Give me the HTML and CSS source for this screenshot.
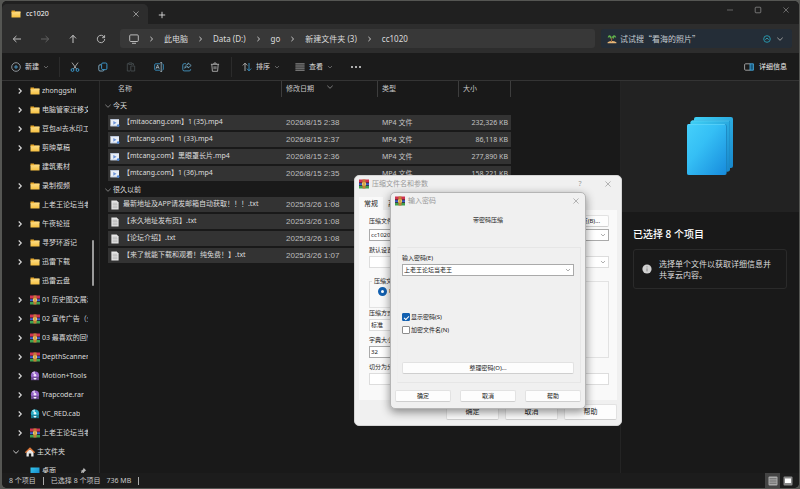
FILE: index.html
```html
<!DOCTYPE html>
<html lang="zh-CN">
<head>
<meta charset="utf-8">
<title>cc1020</title>
<link rel="stylesheet" href="styles.css">
</head>
<body>
<svg class="defs" width="0" height="0" aria-hidden="true">
  <defs>
    <linearGradient id="g-folder" x1="0" y1="0" x2="0" y2="1"><stop offset="0" stop-color="#ffe08a"/><stop offset="1" stop-color="#f5bf3f"/></linearGradient>
    <linearGradient id="g-desk" x1="0" y1="0" x2="1" y2="1"><stop offset="0" stop-color="#35c8ee"/><stop offset="1" stop-color="#1482c4"/></linearGradient>
    <linearGradient id="g-page" x1="0" y1="0" x2="1" y2="1"><stop offset="0" stop-color="#45d0fb"/><stop offset=".4" stop-color="#35bff5"/><stop offset="1" stop-color="#178bdc"/></linearGradient>
    <linearGradient id="g-back" x1="0" y1="0" x2="1" y2="1"><stop offset="0" stop-color="#3fd0f5"/><stop offset="1" stop-color="#1787cc"/></linearGradient>
    <symbol id="folder" viewBox="0 0 10 10"><path d="M.5 1.6h3.3l1.1 1.2h4.6V4H.5z" fill="#e8a92c"/><path d="M.5 3.2h3.6l.9-.7h4.5v6H.5z" fill="url(#g-folder)"/></symbol>
    <symbol id="rar" viewBox="0 0 10 10"><path d="M0 .5h10V4H0z" fill="#cf3350"/><path d="M0 4h10v2.500H0z" fill="#3f5fcb"/><path d="M0 6.500h10v3H0z" fill="#3fa04d"/><path d="M0 3.600h10v.6H0zM0 6.300h10v.6H0z" fill="#241a33"/><path d="M3.500.5h3v9h-3z" fill="#c47c35"/><path d="M3 3.500h4v3H3z" fill="#f0c863"/><path d="M4.500 4.500h1v1h-1z" fill="#6a3f22"/></symbol>
    <symbol id="disc-p" viewBox="0 0 10 10"><circle cx="5" cy="4.600" r="4.100" fill="#9664c8"/><path d="M5 4.600 2 1.800A4.100 4.100 0 0 1 5 .5z" fill="#d3b8ec"/><circle cx="5" cy="4.300" r="1.300" fill="#efe6f7"/><path d="M1 6.200h8v3H1z" fill="#6d4a92"/><path d="M3.200 7h3.600L5 9z" fill="#f4effa"/></symbol>
    <symbol id="disc-c" viewBox="0 0 10 10"><circle cx="5" cy="4.600" r="4.100" fill="#29a9c4"/><path d="M5 4.600 2 1.800A4.100 4.100 0 0 1 5 .5z" fill="#a9e6f0"/><circle cx="5" cy="4.300" r="1.300" fill="#e6f8fb"/><path d="M1 6.200h8v3H1z" fill="#187a92"/><path d="M3.200 7h3.600L5 9z" fill="#effafc"/></symbol>
    <symbol id="home" viewBox="0 0 10 10"><path d="M1.500 4.500 5 1.300l3.500 3.200v5H6.200V6.500H3.800v3H1.500z" fill="#e9e9e9"/><path d="M.8 5.300 5 1.200l4.200 4.100" fill="none" stroke="#e07a3c" stroke-width="1.300" stroke-linecap="round"/></symbol>
    <symbol id="desk" viewBox="0 0 10 10"><path d="M.5 1.500h9v7h-9z" fill="url(#g-desk)"/></symbol>
    <symbol id="pin" viewBox="0 0 8 8"><path d="M4.600.8 7.200 3.400l-.8.4-1.500 1.500-.3 1.400-3-3L3 3.400 4.400 2z" fill="#b5b5b5"/><path d="M3 5 1 7" stroke="#b5b5b5" stroke-width=".8"/></symbol>
    <symbol id="right" viewBox="0 0 6 8"><path d="M1.700 1.500 4.300 4 1.700 6.500" fill="none" stroke="currentColor" stroke-width="1.100"/></symbol>
    <symbol id="down" viewBox="0 0 8 6"><path d="M1.300 1.700 4 4.300l2.700-2.600" fill="none" stroke="currentColor" stroke-width=".9"/></symbol>
    <symbol id="cross" viewBox="0 0 10 10"><path d="m1.800 1.800 6.400 6.400M8.200 1.800 1.800 8.200" fill="none" stroke="currentColor" stroke-width=".9"/></symbol>
    <symbol id="video" viewBox="0 0 10 10"><path d="M.4 1.300h8.600v7H.4z" fill="#e9eef6"/><path d="M.4 1.300h8.600v.8H.4zM.4 7.500h8.600v.8H.4z" fill="#bcc9df"/><path d="M3.300 2.900 6.500 4.800 3.300 6.700z" fill="#6d93d8"/><circle cx="8.200" cy="7.600" r="1.300" fill="#4d87d8"/></symbol>
    <symbol id="txt" viewBox="0 0 10 10"><path d="M1.400.5h5.300l1.900 1.900v7.100H1.400z" fill="#e6e6e6"/><path d="M2.600 3.200h4.600M2.600 4.700h4.900M2.600 6.200h4.900M2.600 7.700h4.900" stroke="#a0a0a0" stroke-width=".6"/></symbol>
  </defs>
</svg>

<div class="window">
  <header class="tabs">
    <div class="tab">
      <svg class="i10"><use href="#folder"/></svg>
      <span class="tab-name">cc1020</span>
      <button class="plain" aria-label="关闭标签页"><svg class="i8"><use href="#cross"/></svg></button>
    </div>
    <button class="plain new-tab" aria-label="新标签页"><svg class="i8" viewBox="0 0 8 8"><path d="M4 .8v6.400M.8 4h6.400" stroke="#ddd" stroke-width=".9"/></svg></button>
    <div class="win-buttons">
      <button class="plain" aria-label="最小化"><svg class="i8" viewBox="0 0 8 8"><path d="M1 4h6" stroke="#777" stroke-width=".8"/></svg></button>
      <button class="plain" aria-label="最大化"><svg class="i8" viewBox="0 0 8 8"><rect x="1.200" y="1.200" width="5.600" height="5.600" rx=".8" fill="none" stroke="#888" stroke-width=".8"/></svg></button>
      <button class="plain" aria-label="关闭"><svg class="i8"><use href="#cross"/></svg></button>
    </div>
  </header>

  <nav class="navbar">
    <div class="nav-buttons">
      <button class="plain" aria-label="后退"><svg class="i10" viewBox="0 0 10 10"><path d="M9 5H1.400M4.400 2 1.300 5l3.100 3" fill="none" stroke="#d0d0d0" stroke-width=".9"/></svg></button>
      <button class="plain" aria-label="前进" disabled><svg class="i10" viewBox="0 0 10 10"><path d="M1 5h7.600M5.600 2l3.100 3-3.100 3" fill="none" stroke="#696969" stroke-width=".9"/></svg></button>
      <button class="plain" aria-label="向上"><svg class="i10" viewBox="0 0 10 10"><path d="M5 9V1.400M2 4.400l3-3.100 3 3.100" fill="none" stroke="#d8d8d8" stroke-width=".9"/></svg></button>
      <button class="plain" aria-label="刷新"><svg class="i10" viewBox="0 0 10 10"><path d="M8.300 3.300A3.700 3.700 0 1 0 8.700 5M8.600 1.200v2.500H6.100" fill="none" stroke="#c4c4c4" stroke-width=".9"/></svg></button>
    </div>
    <div class="address">
      <svg class="i10" viewBox="0 0 10 10"><rect x=".7" y=".9" width="8.600" height="6.600" rx="1" fill="none" stroke="#c8c8c8" stroke-width=".9"/><path d="M3 9.300h4" stroke="#c8c8c8" stroke-width=".9"/></svg>
      <svg class="sep"><use href="#right"/></svg><a href="#">此电脑</a>
      <svg class="sep"><use href="#right"/></svg><a href="#">Data (D:)</a>
      <svg class="sep"><use href="#right"/></svg><a href="#">go</a>
      <svg class="sep"><use href="#right"/></svg><a href="#">新建文件夹 (3)</a>
      <svg class="sep"><use href="#right"/></svg><a href="#">cc1020</a>
    </div>
    <div class="search">
      <svg class="i10" viewBox="0 0 10 10"><path d="M.6 8.200Q5 5.800 9.400 8.200v1H.6z" fill="#e6b678"/><path d="M4.900 3.200 4.400 8" stroke="#a06b3b" stroke-width="1"/><path d="M4.800 3.200C3 .2.800 1 .8 3.800l2-.7L3 5zM4.800 3.200C6.600.2 9 1 9.200 3.800l-2-.7-.4 1.800z" fill="#5fae4c"/></svg>
      <input type="text" value="试试搜“看海的照片”" aria-label="搜索">
      <svg class="i8" viewBox="0 0 8 8"><circle cx="4" cy="4" r="3.300" fill="none" stroke="#2a93a8"/><path d="M2.400 4.700 4 3l1.600 1.700" fill="none" stroke="#2fa9c0" stroke-width=".9"/></svg>
      <svg class="down"><use href="#down"/></svg>
    </div>
  </nav>

  <div class="commands">
    <button class="cmd new"><svg class="i10" viewBox="0 0 10 10"><circle cx="5" cy="5" r="4.300" fill="none" stroke="#a9b3b9" stroke-width=".8"/><path d="M5 3v4M3 5h4" stroke="#58aadd" stroke-width=".8"/></svg>新建<svg class="down"><use href="#down"/></svg></button>
    <div class="cmd-icons">
      <button class="plain" aria-label="剪切"><svg class="i10" viewBox="0 0 10 10"><path d="M2 .6 6.600 7M8 .6 3.400 7" stroke="#c5c5c5" stroke-width=".8"/><circle cx="2.500" cy="8" r="1.400" fill="none" stroke="#3ea3dc" stroke-width=".9"/><circle cx="7.500" cy="8" r="1.400" fill="none" stroke="#3ea3dc" stroke-width=".9"/></svg></button>
      <button class="plain" aria-label="复制"><svg class="i10" viewBox="0 0 10 10"><path d="M3 2.800H2A1.200 1.200 0 0 0 .8 4v3.800A1.200 1.200 0 0 0 2 9h2.800A1.200 1.200 0 0 0 6 8" fill="none" stroke="#8fc1de" stroke-width=".8"/><rect x="3.600" y="1" width="5.300" height="6.600" rx="1.200" fill="none" stroke="#3ea3dc" stroke-width=".9"/></svg></button>
      <button class="plain" aria-label="粘贴" disabled><svg class="i10" viewBox="0 0 10 10"><path d="M4 9H1.300V1.700h1.500M6 1.700h1.500v1.500M2.800.9H6v1.500H2.800zM4.800 4h3.900v5H4.800z" fill="none" stroke="#4a5154" stroke-width=".8"/></svg></button>
      <button class="plain" aria-label="重命名"><svg class="i10" viewBox="0 0 10 10"><path d="M6 1.800H1.700a1 1 0 0 0-1 1v4.400a1 1 0 0 0 1 1H6M8.400 1.800a1 1 0 0 1 .9 1v4.400a1 1 0 0 1-.9 1" fill="none" stroke="#3ea3dc" stroke-width=".8"/><path d="M7.200.6v8.800M6.300.6h1.800M6.300 9.400h1.800M2 6.800l1.600-3.900 1.600 3.900M2.500 5.600h2.200" fill="none" stroke="#b8d0dc" stroke-width=".7"/></svg></button>
      <button class="plain" aria-label="共享"><svg class="i10" viewBox="0 0 10 10"><path d="M4 1.700H2.200A1.400 1.400 0 0 0 .8 3.100v4.400a1.400 1.400 0 0 0 1.400 1.400h5a1.400 1.400 0 0 0 1.400-1.400V7" fill="none" stroke="#4aa6d8" stroke-width=".8"/><path d="M6 .9 9.200 3.500 6 6V4.600C4.500 4.600 3.600 5 2.800 6.300 3 4 4.200 2.600 6 2.400z" fill="none" stroke="#7fc0e0" stroke-width=".7"/></svg></button>
      <button class="plain" aria-label="删除"><svg class="i10" viewBox="0 0 10 10"><path d="M.9 2.300h8.200M3.500 2.200C3.500.4 6.500.4 6.500 2.200M1.800 2.400l.6 6.900h5.200l.6-6.900M4.100 4.200v3M5.900 4.200v3" fill="none" stroke="#c4c4c4" stroke-width=".8"/></svg></button>
    </div>
    <button class="cmd"><svg class="i10" viewBox="0 0 10 10"><path d="M3 9V1.300M.8 3.400 3 1.200l2.200 2.200" fill="none" stroke="#c8c8c8" stroke-width=".8"/><path d="M7 1v7.700M4.900 6.600 7 8.800l2.200-2.200" fill="none" stroke="#3ea3dc" stroke-width=".8"/></svg>排序<svg class="down"><use href="#down"/></svg></button>
    <button class="cmd view"><svg class="i10" viewBox="0 0 10 10"><path d="M.4 1.900h9.200M.4 4h9.200M.4 6.100h9.200M.4 8.200h9.200" stroke="#bdbdbd" stroke-width=".8"/></svg>查看<svg class="down"><use href="#down"/></svg></button>
    <button class="plain more" aria-label="更多"><svg class="i10" viewBox="0 0 10 10"><path d="M0 4.200h2v1.600H0zM4 4.200h2v1.600H4zM8 4.200h2v1.600H8z" fill="#e0e0e0"/></svg></button>
    <button class="cmd details-toggle"><svg class="i10" viewBox="0 0 10 10"><path d="M6 1.800H1.600a1 1 0 0 0-1 1v4.400a1 1 0 0 0 1 1H6" fill="none" stroke="#bbb" stroke-width=".8"/><path d="M6 1.800h3.400v6.400H6z" fill="#175a80" stroke="#4db2e8" stroke-width=".8"/></svg>详细信息</button>
  </div>

  <main class="content">
    <aside class="sidebar">
      <ul class="tree">
        <li><svg class="sep"><use href="#right"/></svg><svg class="i10"><use href="#folder"/></svg><span>zhonggshi</span></li>
        <li><svg class="sep"><use href="#right"/></svg><svg class="i10"><use href="#folder"/></svg><span>电脑管家迁移文件</span></li>
        <li><svg class="sep"><use href="#right"/></svg><svg class="i10"><use href="#folder"/></svg><span>豆包al去水印工具</span></li>
        <li><svg class="sep"><use href="#right"/></svg><svg class="i10"><use href="#folder"/></svg><span>剪映草稿</span></li>
        <li class="leaf"><svg class="i10"><use href="#folder"/></svg><span>建筑素材</span></li>
        <li><svg class="sep"><use href="#right"/></svg><svg class="i10"><use href="#folder"/></svg><span>录制视频</span></li>
        <li class="leaf"><svg class="i10"><use href="#folder"/></svg><span>上老王论坛当老王</span></li>
        <li><svg class="sep"><use href="#right"/></svg><svg class="i10"><use href="#folder"/></svg><span>午夜轮班</span></li>
        <li><svg class="sep"><use href="#right"/></svg><svg class="i10"><use href="#folder"/></svg><span>寻梦环游记</span></li>
        <li><svg class="sep"><use href="#right"/></svg><svg class="i10"><use href="#folder"/></svg><span>迅雷下载</span></li>
        <li class="leaf"><svg class="i10"><use href="#folder"/></svg><span>迅雷云盘</span></li>
        <li><svg class="sep"><use href="#right"/></svg><svg class="i10"><use href="#rar"/></svg><span>01 历史图文展示</span></li>
        <li><svg class="sep"><use href="#right"/></svg><svg class="i10"><use href="#rar"/></svg><span>02 宣传广告（全）</span></li>
        <li><svg class="sep"><use href="#right"/></svg><svg class="i10"><use href="#rar"/></svg><span>03 最喜欢的回忆</span></li>
        <li><svg class="sep"><use href="#right"/></svg><svg class="i10"><use href="#rar"/></svg><span>DepthScanner</span></li>
        <li><svg class="sep"><use href="#right"/></svg><svg class="i10"><use href="#disc-p"/></svg><span>Motion+Tools</span></li>
        <li><svg class="sep"><use href="#right"/></svg><svg class="i10"><use href="#disc-p"/></svg><span>Trapcode.rar</span></li>
        <li><svg class="sep"><use href="#right"/></svg><svg class="i10"><use href="#disc-c"/></svg><span>VC_RED.cab</span></li>
        <li><svg class="sep"><use href="#right"/></svg><svg class="i10"><use href="#rar"/></svg><span>上老王论坛当老王</span></li>
        <li class="root"><svg class="down"><use href="#down"/></svg><svg class="i10"><use href="#home"/></svg><span>主文件夹</span></li>
        <li class="leaf"><svg class="i10"><use href="#desk"/></svg><span>桌面</span><svg class="i8 pin"><use href="#pin"/></svg></li>
      </ul>
      <div class="scroll"><div class="thumb"></div></div>
    </aside>

    <section class="files">
      <table>
        <colgroup><col class="c-gap"><col class="c-name"><col class="c-date"><col class="c-type"><col class="c-size"></colgroup>
        <thead><tr><td></td><th class="h-name">名称</th><th class="sorted">修改日期<svg class="down"><use href="#down"/></svg></th><th>类型</th><th>大小</th></tr></thead>
        <tbody>
          <tr class="group"><th colspan="5"><svg class="down"><use href="#down"/></svg>今天</th></tr>
          <tr><td></td><td><svg class="i10"><use href="#video"/></svg>【mitaocang.com】1 (35).mp4</td><td>2026/8/15 2:38</td><td>MP4 文件</td><td>232,326 KB</td></tr>
          <tr><td></td><td><svg class="i10"><use href="#video"/></svg>【mtcang.com】1 (33).mp4</td><td>2026/8/15 2:37</td><td>MP4 文件</td><td>86,118 KB</td></tr>
          <tr><td></td><td><svg class="i10"><use href="#video"/></svg>【mtcang.com】黑眼罩长片.mp4</td><td>2026/8/15 2:36</td><td>MP4 文件</td><td>277,890 KB</td></tr>
          <tr><td></td><td><svg class="i10"><use href="#video"/></svg>【mtcang.com】1 (36).mp4</td><td>2026/8/15 2:35</td><td>MP4 文件</td><td>158,221 KB</td></tr>
        </tbody>
        <tbody>
          <tr class="group late"><th colspan="5"><svg class="down"><use href="#down"/></svg>很久以前</th></tr>
          <tr><td></td><td><svg class="i10"><use href="#txt"/></svg>最新地址及APP请发邮箱自动获取！！！.txt</td><td>2025/3/26 1:08</td><td></td><td></td></tr>
          <tr><td></td><td><svg class="i10"><use href="#txt"/></svg>【永久地址发布页】.txt</td><td>2025/3/26 1:08</td><td></td><td></td></tr>
          <tr><td></td><td><svg class="i10"><use href="#txt"/></svg>【论坛介绍】.txt</td><td>2025/3/26 1:08</td><td></td><td></td></tr>
          <tr><td></td><td><svg class="i10"><use href="#txt"/></svg>【来了就能下载和观看！纯免费！】.txt</td><td>2025/3/26 1:07</td><td></td><td></td></tr>
        </tbody>
      </table>
    </section>

    <aside class="details">
      <div class="preview">
        <svg width="48" height="60" viewBox="0 0 48 60"><rect x="8" y="1" width="39" height="51" rx="2" fill="url(#g-back)"/><rect x="4.500" y="4.500" width="39.500" height="51" rx="2" fill="#1b86bd"/><rect x="4.500" y="4.500" width="39" height="51" rx="2" fill="url(#g-back)"/><rect x="1" y="8" width="39.700" height="51" rx="2" fill="#1a80bb"/><rect x="1" y="8" width="39" height="51" rx="2" fill="url(#g-page)"/><path d="M2 8.500h37M6 4.900h37" stroke="#85e6fd" stroke-width=".6" opacity=".6"/></svg>
      </div>
      <h2>已选择 8 个项目</h2>
      <div class="hint">
        <svg class="i10" viewBox="0 0 10 10"><circle cx="5" cy="5" r="4.600" fill="#d0d0d0"/><path d="M5 4.400v3M5 2.400v1" stroke="#777" stroke-width=".8"/></svg>
        <p>选择单个文件以获取详细信息并共享云内容。</p>
      </div>
    </aside>
  </main>

  <footer class="status">
    <span>8 个项目</span><i class="bar"></i><span>已选择 8 个项目</span><span class="total">736 MB</span><i class="bar"></i>
    <div class="view-modes">
      <button class="plain on" aria-label="详细信息视图"><svg class="i10" viewBox="0 0 10 10"><rect x=".5" y=".5" width="9" height="9" rx="1" fill="#aaa"/><path d="M1.500 2.800h7M1.500 5h7M1.500 7.200h7" stroke="#555" stroke-width=".8"/></svg></button>
      <button class="plain" aria-label="大图标视图"><svg class="i10" viewBox="0 0 10 10"><rect x=".5" y=".5" width="9" height="9" rx="1" fill="#888"/><path d="M2 2.500h6v4.500H2z" fill="#fff"/></svg></button>
    </div>
  </footer>
</div>

<div class="dialog archive" role="dialog" aria-label="压缩文件名和参数">
  <div class="title"><svg class="i10"><use href="#rar"/></svg><span>压缩文件名和参数</span><button class="plain help" aria-label="帮助">?</button><button class="plain" aria-label="关闭"><svg class="i8"><use href="#cross"/></svg></button></div>
  <div class="sheet-tabs"><button class="active">常规</button><button>高级</button></div>
  <div class="sheet">
    <div class="line"><label for="arc">压缩文件名(A)</label><button class="btn browse">浏览(B)...</button></div>
    <div class="combo"><input id="arc" type="text" value="cc1020.rar"><svg class="down"><use href="#down"/></svg></div>
    <label class="lab" for="prof">默认设置</label>
    <div class="combo soft"><select id="prof"><option></option></select><svg class="down"><use href="#down"/></svg></div>
    <div class="cols">
      <div class="col">
        <fieldset class="format"><legend>压缩文件格式</legend><label><input type="radio" name="fmt" checked>RAR</label></fieldset>
        <label class="lab" for="method">压缩方式(C)</label>
        <div class="combo soft"><select id="method"><option>标准</option></select></div>
        <label class="lab" for="dict">字典大小(I)</label>
        <div class="combo"><select id="dict"><option>32</option></select></div>
      </div>
      <fieldset class="options"></fieldset>
    </div>
    <label class="lab" for="split">切分为分卷(V)</label>
    <div class="combo soft"><input id="split" type="text"></div>
  </div>
  <div class="actions"><button class="btn">确定</button><button class="btn">取消</button><button class="btn">帮助</button></div>
</div>

<div class="dialog password" role="dialog" aria-label="输入密码">
  <div class="title"><svg class="i10"><use href="#rar"/></svg><span>输入密码</span><button class="plain" aria-label="关闭"><svg class="i8"><use href="#cross"/></svg></button></div>
  <p class="lead">带密码压缩</p>
  <div class="box">
    <label class="lab" for="pw">输入密码(E)</label>
    <div class="combo"><input id="pw" type="text" value="上老王论坛当老王"><svg class="down"><use href="#down"/></svg></div>
    <div class="checks">
      <label><input type="checkbox" checked>显示密码(S)</label>
      <label><input type="checkbox">加密文件名(N)</label>
    </div>
    <button class="btn organize">整理密码(O)...</button>
  </div>
  <div class="actions"><button class="btn">确定</button><button class="btn">取消</button><button class="btn">帮助</button></div>
</div>
</body>
</html>
```

FILE: styles.css
```css
* { box-sizing: border-box; }
html, body { height: 100%; }
body {
  margin: 0;
  padding: 1px 1px 1px 2px;
  background: #555653;
  color: #dcdcdc;
  font: 7px/10px "Noto Sans", "Noto Sans CJK SC", sans-serif;
  overflow: hidden;
  display: flex;
  flex-direction: column;
}
button, input, select { font: inherit; color: inherit; margin: 0; }
p, h2, ul { margin: 0; padding: 0; }
a { color: inherit; text-decoration: none; }
svg { display: block; flex: none; }
.defs { height: 0; }
.i10 { width: 10px; height: 10px; }
.i8 { width: 8px; height: 8px; }
.sep { width: 6px; height: 8px; }
.down { width: 8px; height: 6px; }
.plain { display: flex; align-items: center; justify-content: center; padding: 0; border: 0; background: none; }

.window {
  flex: 1;
  min-height: 0;
  display: flex;
  flex-direction: column;
  background: #191919;
  border-radius: 5px;
  overflow: hidden;
}

/* tab strip */
.tabs { display: flex; height: 23px; background: #202020; align-items: center; }
.tab {
  display: flex;
  align-items: center;
  align-self: flex-end;
  gap: 5px;
  width: 146px;
  height: 20px;
  padding: 0 8px 0 9px;
  background: #2d2d2d;
  border-radius: 5px 5px 0 0;
}
.tab-name { flex: 1; color: #fff; }
.new-tab { margin-left: 8px; width: 12px; padding-top: 4px; }
.tabs .i8 { color: #bbb; }
.win-buttons { display: flex; gap: 20px; margin: 0 9px 6px auto; }
.win-buttons .i8 { color: #888; }

/* navigation bar */
.navbar { display: flex; align-items: center; height: 29px; padding-right: 7px; background: #2d2d2d; font-size: 8px; }
.nav-buttons { display: flex; gap: 18px; width: 118px; padding-left: 10px; }
.address {
  flex: 1;
  display: flex;
  align-items: center;
  gap: 10px;
  height: 19px;
  padding-left: 9px;
  background: #383838;
  border-radius: 3px;
}
.address .sep { width: 5px; color: #ddd; }
.search {
  display: flex;
  align-items: center;
  gap: 3px;
  width: 191px;
  height: 19px;
  margin-left: 6px;
  padding: 0 8px 0 6px;
  background: #242d37;
  border-radius: 3px;
}
.search input { flex: 1; min-width: 0; border: 0; padding: 0; background: none; color: #c5cbd0; font-family: "Noto Sans CJK SC", sans-serif; }
.search .i8 { margin-right: 2px; }
.search .down { color: #aaa; }

/* command bar */
.commands {
  display: flex;
  align-items: center;
  height: 28px;
  padding: 0 12px 0 9px;
  background: #1b1b1b;
  border-bottom: 1px solid #343434;
}
.cmd { display: flex; align-items: center; gap: 4px; padding: 0; border: 0; background: none; }
.cmd .down { width: 6px; color: #888; }
.cmd.new { width: 48px; }
.cmd-icons { display: flex; gap: 18px; margin-right: 10px; padding: 5px 11px 5px 10px; border: solid #2b2b2b; border-width: 0 1px; }
.cmd.view { margin-left: 15px; }
.more { margin-left: 18px; }
.details-toggle { margin-left: auto; color: #eee; gap: 5px; }

/* content */
.content { flex: 1; min-height: 0; display: flex; }
.sidebar { display: flex; width: 98px; border-right: 1px solid #2b2b2b; overflow: hidden; }
.tree { flex: 1; min-width: 0; list-style: none; }
.tree li { display: flex; align-items: center; height: 19px; padding-left: 15px; white-space: nowrap; }
.tree .sep { margin-right: 7px; }
.tree li.leaf { padding-left: 28px; }
.tree li.root { padding-left: 10px; }
.tree .down { margin-right: 5px; }
.tree span { margin-left: 2px; overflow: hidden; }
.pin { margin-left: 23px; }
.scroll { width: 11px; padding: 159px 0 0 4px; }
.thumb { width: 2px; height: 46px; background: #9a9a9a; border-radius: 1px; }

.files { flex: 1; min-width: 0; padding-left: 4px; overflow: hidden; }
.files table { width: 407px; table-layout: fixed; border-spacing: 0; }
.c-gap { width: 4px; }
.c-name { width: 174px; }
.c-date { width: 96px; }
.c-type { width: 81px; }
.c-size { width: 52px; }
.files th, .files td { padding: 0 4px; font-weight: 400; text-align: left; white-space: nowrap; overflow: hidden; }
.files thead th { height: 16px; border-right: 1px solid #3d3d3d; color: #c8c8c8; }
.files thead .h-name { padding-left: 10px; }
.sorted .down { display: inline-block; margin-left: 12px; vertical-align: top; color: #888; }
.files .group th { height: 18px; padding: 0; }
.files .group.late th { height: 14px; }
.group .down { display: inline-block; margin-right: 1px; vertical-align: middle; color: #888; }
.files tbody td { height: 17px; border-bottom: 2px solid transparent; background: #333 padding-box; }
.files tbody td:first-child { padding: 0; background: none; }
.files tbody td:nth-child(2) { padding-left: 2px; }
.files tbody td:nth-child(3) { color: #bdbdbd; font-family: "Liberation Sans", "Noto Sans CJK SC", sans-serif; font-size: 8px; }
.files tbody td:nth-child(4) { color: #c4c4c4; }
.files tbody td:nth-child(5) { color: #c4c4c4; text-align: right; padding-right: 3px; }
.files td .i10 { display: inline-block; margin-right: 3px; vertical-align: middle; }

.details { width: 179px; border-left: 1px solid #242424; }
.preview { display: flex; justify-content: center; height: 131px; padding-top: 35px; background: #222; }
.details h2 { margin: 15px 12px 0; font-size: 10px; line-height: 14px; font-weight: 500; color: #fff; }
.hint {
  display: flex;
  align-items: center;
  gap: 7px;
  margin: 8px 12px 0;
  padding: 8px;
  border: 1px solid #2a2a2a;
  border-radius: 3px;
  font-size: 8px;
  line-height: 11px;
}

/* status bar */
.status { display: flex; align-items: center; height: 15px; padding-left: 7px; background: #1c1c1c; color: #c8c8c8; }
.bar { width: 1px; height: 8px; margin: 0 7px; background: #aaa; }
.total { margin-left: 6px; }
.view-modes { display: flex; align-self: stretch; margin-left: auto; margin-right: 4px; }
.view-modes button { width: 15px; }
.view-modes .on { background: #444; }

/* dialogs */
.dialog {
  position: absolute;
  display: flex;
  flex-direction: column;
  background: #f0f0f0;
  color: #222;
  border-radius: 5px;
  font-size: 6px;
  line-height: 10px;
}
.archive { left: 354px; top: 175px; width: 268px; padding: 0 4px 5px; border: 1px solid #d5d5d5; }
.password { left: 390px; top: 192px; width: 196px; padding: 0 4px 6px; border: 1px solid #b5b5b5; box-shadow: 0 3px 10px rgba(0, 0, 0, .45); }
.title { display: flex; align-items: center; gap: 3px; height: 15px; font-size: 7px; color: #999; }
.title span { flex: 1; }
.title .i8 { margin-right: 1px; }
.help { width: 10px; margin-right: 16px; }
.archive .title { padding-right: 4px; }
.sheet-tabs { display: flex; padding-top: 6px; font-size: 7px; }
.sheet-tabs button { height: 13px; width: 24px; padding: 0; border: 0; background: none; }
.sheet-tabs .active { background: #f9f9f9; }
.sheet { padding: 4px 8px 15px 10px; background: #f9f9f9; }
.line { display: flex; justify-content: space-between; align-items: center; height: 14px; margin-bottom: 1px; }
.lab { display: block; height: 11px; }
.btn { height: 12px; padding: 0; border: 1px solid #e2e2e2; border-bottom-color: #cfcfcf; border-radius: 2px; background: #fdfdfd; line-height: 10px; }
.browse { width: 56px; padding-right: 8px; text-align: right; }
.combo { display: flex; align-items: center; height: 12px; padding: 0 2px 0 1px; border: 1px solid #aaa; background: #fff; }
.combo.soft { border-color: #ddd; }
.combo input, .combo select { flex: 1; min-width: 0; height: 10px; padding: 0; border: 0; background: none; appearance: none; }
.combo .down { width: 6px; color: #888; }
.archive .combo + .lab { margin-top: 4px; }
.cols { display: flex; gap: 8px; margin: 8px 0 4px; }
.col { width: 120px; }
fieldset { margin: 0; border: 1px solid #e2e2e2; }
.format { height: 32px; padding: 0 8px; }
.format legend { padding: 0 2px; margin-left: -6px; }
.format label, .checks label { display: flex; align-items: center; }
.format input { width: 9px; height: 9px; margin: 0 2px 0 0; appearance: none; border: 3px solid #1260b0; border-radius: 50%; background: #fff; }
.options { flex: 1; margin: 5px 0 0; }
.archive .actions { display: flex; justify-content: flex-end; gap: 6px; padding-top: 4px; }
.archive .actions .btn { width: 53px; height: 16px; font-size: 7px; }

.lead { margin-top: 7px; text-align: center; }
.box { margin: 22px 0 0 2px; padding: 5px 6px 8px 4px; border: 1px solid #e6e6e6; border-left-color: #eee; }
.checks { display: grid; gap: 3px; padding: 36px 0 27px; }
.checks input { width: 8px; height: 8px; margin: 0 1px 0 0; appearance: none; border: 1px solid #8c8c8c; border-radius: 1px; background: #fff; }
.checks input:checked { border-color: #1260b0; background: #1260b0; display: grid; place-items: center; }
.checks input:checked::before { content: ""; width: 4px; height: 2px; border: solid #fff; border-width: 0 0 1px 1px; rotate: -45deg; }
.organize { width: 100%; }
.password .actions { display: flex; justify-content: space-between; margin-top: 7px; }
.password .actions .btn { width: 56px; }
```
